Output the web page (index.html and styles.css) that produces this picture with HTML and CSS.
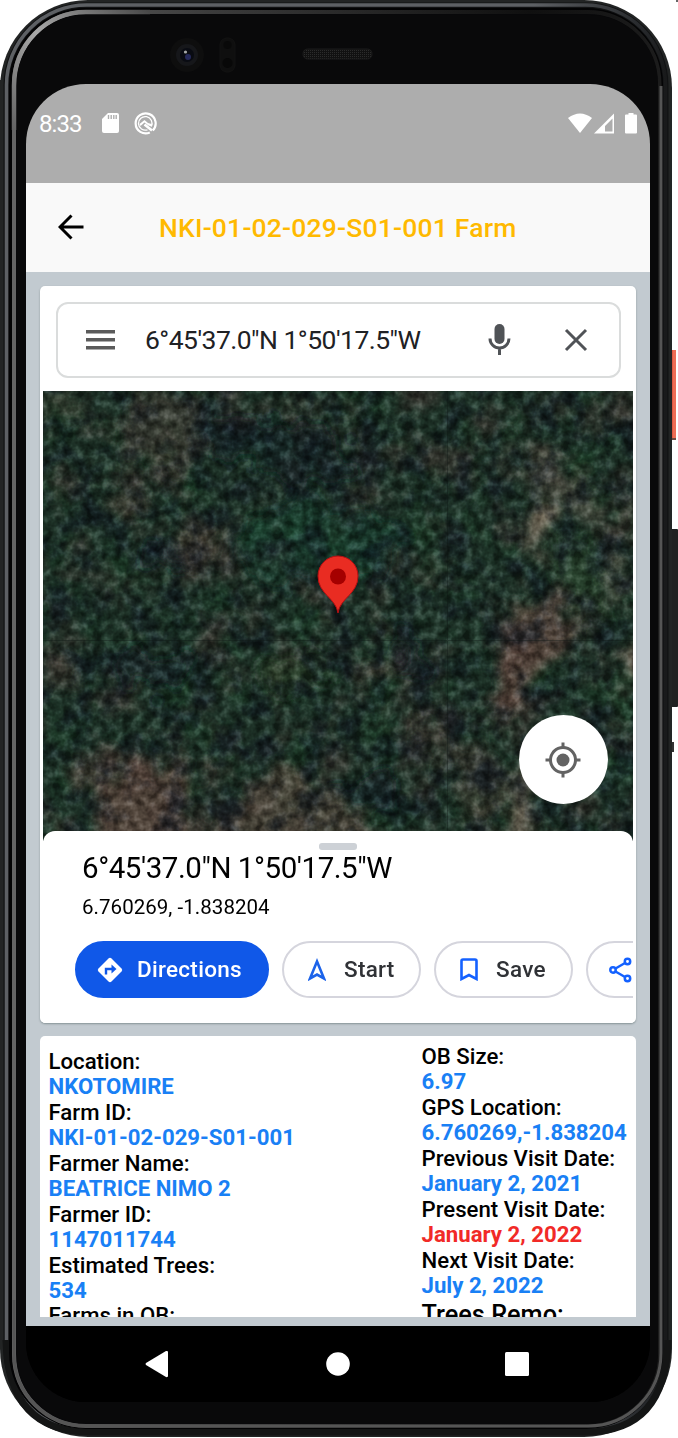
FILE: index.html
```html
<!DOCTYPE html>
<html lang="en">
<head>
<meta charset="utf-8">
<title>Farm details</title>
<link rel="stylesheet" href="styles.css">
</head>
<body>
<div class="device">
  <svg class="shell" width="678" height="1438" viewBox="0 0 678 1438" aria-hidden="true">
    <defs>
      <linearGradient id="rim" x1="0" y1="0" x2="1" y2="0">
        <stop offset="0" stop-color="#5d6064"/><stop offset=".8" stop-color="#5d6064"/><stop offset=".97" stop-color="#25272a"/><stop offset="1" stop-color="#191a1b"/>
      </linearGradient>
      <linearGradient id="bevel" x1="0" y1="0" x2="1" y2="0">
        <stop offset="0" stop-color="#646464"/><stop offset=".3" stop-color="#3c3c3c"/><stop offset=".8" stop-color="#101010"/><stop offset="1" stop-color="#1c1c1c"/>
      </linearGradient>
      <linearGradient id="shine" gradientUnits="userSpaceOnUse" x1="14" y1="130" x2="150" y2="12">
        <stop offset="0" stop-color="#646464"/><stop offset=".45" stop-color="#a8a8a8"/><stop offset="1" stop-color="#484848"/>
      </linearGradient>
      <pattern id="mesh" width="2" height="2" patternUnits="userSpaceOnUse"><rect width="2" height="2" fill="#111"/><rect width="1" height="1" fill="#2b2b2b"/></pattern>
    </defs>
    <rect x="670" y="350" width="6" height="89" fill="#ed6d55"/>
    <rect x="671" y="350" width="2" height="89" fill="#dc5942"/>
    <rect x="670" y="438" width="6" height="2" fill="#6d4a43"/>
    <rect x="670" y="529" width="8" height="178" rx="1" fill="#202121"/>
    <rect x="672" y="742" width="2" height="10" fill="#333"/>
    <rect x="676" y="0" width="2" height="2" fill="#666"/>
    <rect x="0" y="0" width="672" height="1437" rx="88" ry="88" fill="#222424"/>
    <path d="M0 80h8v1268H0z" fill="#222424"/>
    <rect x="3.500" y="2.500" width="665" height="1431" rx="83" fill="#111213"/>
    <rect x="6.500" y="5" width="659" height="1425" rx="80" fill="none" stroke="url(#rim)" stroke-width="3.500"/>
    <path d="M6 1340Q8 1432 90 1432H586Q666 1432 668 1340" fill="none" stroke="#141515" stroke-width="7"/>
    <rect x="9" y="8" width="654" height="1421" rx="77" fill="#030304"/>
    <rect x="14" y="12" width="645.500" height="1414" rx="72" fill="#08080a" stroke="url(#bevel)" stroke-width="4"/>
    <path d="M14 130V86A72 74 0 0 1 86 12H150" fill="none" stroke="url(#shine)" stroke-width="4.500"/>
    <path d="M14 1300V1354A72 72 0 0 0 86 1426H588A73 73 0 0 0 661 1353V86" fill="none" stroke="#555" stroke-width="3"/>
    <rect x="17" y="15" width="641" height="1408" rx="68" fill="#09090a"/>
    <circle cx="187" cy="55" r="17" fill="#0e0e0e"/><circle cx="187" cy="55" r="11" fill="#16171a"/><circle cx="187" cy="55" r="7" fill="#090b12"/><circle cx="188" cy="57" r="3" fill="#25295a"/><circle cx="185.500" cy="52" r="1.600" fill="#a7a9a8"/>
    <rect x="220" y="38" width="15" height="34" rx="7" fill="#0f0f0f" stroke="#131313"/><circle cx="227.500" cy="45" r="4" fill="#090909"/><circle cx="227.500" cy="63" r="5" fill="#080808"/>
    <rect x="303" y="49" width="69" height="10" rx="4.500" fill="url(#mesh)" stroke="#1c1c1c"/>
  </svg>
  <main class="screen">
    <div class="status">
      <span class="clock">8:33</span>
      <svg class="sd" width="17" height="21" viewBox="0 0 17 21"><path d="M6 0h9q2 0 2 2v16q0 2-2 2H2q-2 0-2-2V6z" fill="#fff"/><path d="M6.500 2v4M9.200 2v4M11.800 2v4M14.200 2v4" stroke="#aeaeae" stroke-width="1.400"/></svg>
      <svg class="badge" width="23" height="23" viewBox="0 0 23 23" fill="none" stroke="#fff"><path d="M18.700 18.500A10 10 0 1 0 15.800 20.500" stroke-width="2.200"/><path d="M17.300 14.500A6.800 6.800 0 1 0 13.500 17.800" stroke-width="1.300"/><path d="M5.500 12L10.500 8l3.500 3 3.500 1v2.500l-3-1L10.500 10.500 6.500 14z" fill="#fff" stroke="none"/><path d="M10.500 12.500l7.500 6" stroke-width="2.600"/></svg>
      <svg class="signals" width="70" height="21" viewBox="0 0 70 21"><path d="M0 5Q12-4 24 5L12 20z" fill="#fff"/><path fill-rule="evenodd" d="M26 20.500L46 .500v20zM37 18.500h7.500V5.500L37 13z" fill="#fff"/><path d="M57 2.500q0-1 1-1h2.500V0h5v1.500H68q1 0 1 1v17q0 1-1 1H58q-1 0-1-1z" fill="#fff"/></svg>
    </div>
    <header class="bar">
      <svg class="back" width="26" height="26" viewBox="0 0 26 26" fill="none" stroke="#000" stroke-width="3"><path d="M25.500 13H2.500M13.500 1.500L2 13l11.500 11.500"/></svg>
      <h1 class="title">NKI-01-02-029-S01-001 Farm</h1>
    </header>
    <div class="content">
      <section class="card place">
        <div class="search">
          <svg width="30" height="20" viewBox="0 0 30 20" fill="#5b5b5b"><path d="M0 0h29v3.500H0zM0 8h29v3.500H0zM0 16h29v3.500H0z"/></svg>
          <span class="query">6°45'37.0"N 1°50'17.5"W</span>
          <svg class="mic" width="24" height="31" viewBox="0 0 24 31"><rect x="6.500" y="0" width="10" height="20" rx="5" fill="#505357"/><path d="M2 14.500a9.500 9.500 0 0 0 19 0M11.500 24v7" fill="none" stroke="#505357" stroke-width="3"/></svg>
          <svg width="24" height="24" viewBox="0 0 24 24"><path d="M2 2l20 20M22 2L2 22" stroke="#505357" stroke-width="3"/></svg>
        </div>
        <div class="map">
          <svg class="imagery" width="590" height="450" viewBox="0 0 590 450">
            <defs>
              <filter id="blotch" x="-20%" y="-20%" width="140%" height="140%"><feTurbulence type="fractalNoise" baseFrequency=".04" numOctaves="4" seed="4" result="n"/><feDisplacementMap in="SourceGraphic" in2="n" scale="55" xChannelSelector="R" yChannelSelector="G"/><feGaussianBlur stdDeviation="5"/></filter>
              <filter id="leaf" x="0" y="0" width="100%" height="100%" color-interpolation-filters="sRGB"><feTurbulence type="fractalNoise" baseFrequency=".025" numOctaves="5" seed="31"/><feColorMatrix values="0 0 0 0 .12  0 0 0 0 .29  0 0 0 0 .17  0 0 0 2.600 -1.200"/></filter>
              <filter id="soil" x="0" y="0" width="100%" height="100%" color-interpolation-filters="sRGB"><feTurbulence type="fractalNoise" baseFrequency=".02" numOctaves="5" seed="17"/><feColorMatrix values="0 0 0 0 .30  0 0 0 0 .23  0 0 0 0 .22  0 0 0 3 -1.400"/></filter>
              <filter id="shade" x="0" y="0" width="100%" height="100%" color-interpolation-filters="sRGB"><feTurbulence type="fractalNoise" baseFrequency=".035" numOctaves="5" seed="23"/><feColorMatrix values="0 0 0 0 .06  0 0 0 0 .09  0 0 0 0 .13  0 0 0 3.200 -1.450"/></filter>
              <filter id="grain" x="0" y="0" width="100%" height="100%" color-interpolation-filters="sRGB"><feTurbulence type="fractalNoise" baseFrequency=".1" numOctaves="3" seed="7"/><feColorMatrix values="0 0 0 1.600 -.360  0 0 0 1.600 -.360  0 0 0 1.600 -.360  0 0 0 0 1"/></filter>
            </defs>
            <rect width="590" height="450" fill="#20352a"/>
            <rect width="590" height="450" filter="url(#leaf)" opacity=".5"/>
            <rect width="590" height="450" filter="url(#soil)" opacity=".5"/>
            <g filter="url(#blotch)" transform="translate(4 4)">
              <g fill="#6a5148" opacity=".7">
                <path d="M97 0h55l8 45-30 32-40-8-15-25z" opacity=".5"/><path d="M75 75l30 10-20 42-15-8z" opacity=".55"/><ellipse cx="145" cy="146" rx="20" ry="32" opacity=".65"/>
                <path d="M458 215l45-12 28 28-15 28-30 15-12 34-25 3 8-47z"/><ellipse cx="357" cy="257" rx="9" ry="14"/><ellipse cx="322" cy="281" rx="18" ry="10" opacity=".6"/>
                <path d="M40 450L58 393l45-30 50 20-15 40-20 35z"/><path d="M20 365h55l-8 22-42 5z" opacity=".7"/><path d="M170 450l40-70 35-12 45 40 60 42z" opacity=".8"/><path d="M0 268l35 8-15 23H0z" opacity=".5"/>
                <path d="M352 335l42-17 65 55 45-5-35 45-45 7-32-48z" opacity=".5"/><path d="M440 450l22-35 80 35z" opacity=".6"/>
              </g>
              <g fill="#807464"><path d="M470 50l35 8 15 38 15-12 40 42-32 8-55-35z" opacity=".4"/><path d="M476 135l27-27 7 16-27 27z" opacity=".9"/><path d="M557 150l30 42-15 12z" opacity=".5"/><ellipse cx="588" cy="267" rx="10" ry="20" fill="#98806c"/><path d="M466 374l22 15-12 53-15-7z" opacity=".75"/></g>
              <g fill="#345037" opacity=".55"><path d="M478 155l55-20 30 40-20 65-30-60z"/><ellipse cx="270" cy="150" rx="80" ry="45" fill="#1d4a34" opacity=".8"/><ellipse cx="245" cy="278" rx="38" ry="22" fill="#29502e" opacity=".7"/></g>
              <g fill="#131e2b" opacity=".55"><ellipse cx="115" cy="161" rx="30" ry="14"/><path d="M60 258l85 4-15 34-62-10z"/><ellipse cx="325" cy="160" rx="15" ry="11"/><path d="M345 238l40 15-5 30-35-10z"/><ellipse cx="320" cy="396" rx="28" ry="18"/><path d="M160 20l120 10 30 50-60 10-90-30z"/></g>
            </g>
            <rect width="590" height="450" filter="url(#shade)" opacity=".6"/>
            <rect width="590" height="450" class="grain" filter="url(#grain)"/>
            <path d="M404.500 0v450M0 249.500h590" stroke="#101914" opacity=".35"/>
            <path d="M295 222C293 207 275 203 275 185a20 20 0 0 1 40 0C315 203 297 207 295 222z" fill="#e92c22" stroke="#b70f12"/><circle cx="295" cy="185.500" r="8" fill="#a50000"/>
          </svg>
          <button class="locate" aria-label="My location"><svg width="36" height="36" viewBox="0 0 36 36"><g fill="none" stroke="#636363" stroke-width="3"><circle cx="18" cy="18" r="12.500"/><path d="M18 .5v5M18 30.500v5M.5 18h5M30.500 18h5"/></g><circle cx="18" cy="18" r="6.500" fill="#636363"/></svg></button>
        </div>
        <div class="sheet">
          <div class="grip"></div>
          <h2 class="coords">6°45'37.0"N 1°50'17.5"W</h2>
          <p class="decimal">6.760269, -1.838204</p>
          <div class="actions">
            <button class="chip primary"><svg width="26" height="26" viewBox="0 0 26 26"><path d="M11.500 1.500q1.500-1.500 3 0l10 10q1.500 1.500 0 3l-10 10q-1.500 1.500-3 0l-10-10q-1.500-1.500 0-3z" fill="#fff"/><path d="M9 17.500V12h6" fill="none" stroke="#1058e8" stroke-width="2.400"/><path d="M14.500 7.500l5 4.500-5 4.500z" fill="#1058e8"/></svg><span>Directions</span></button>
            <button class="chip start"><svg width="18" height="23" viewBox="0 0 18 23"><path d="M9 3.500L2 20.500l7-4 7 4z" fill="none" stroke="#1c63ea" stroke-width="2.600"/></svg><span>Start</span></button>
            <button class="chip save"><svg width="18" height="23" viewBox="0 0 18 23"><path d="M1.500 21V3q0-1.500 1.500-1.500h12q1.500 0 1.500 1.500v18L9 17z" fill="none" stroke="#1461ff" stroke-width="2.600"/></svg><span>Save</span></button>
            <button class="chip share" aria-label="Share"><svg width="24" height="26" viewBox="0 0 24 26" fill="none" stroke="#1461ff" stroke-width="2.500"><path d="M6.500 11.500L16 6M6.500 14.500L16 20"/><circle cx="4" cy="13" r="2.700"/><circle cx="18.500" cy="4.500" r="2.700"/><circle cx="18.500" cy="21.500" r="2.700"/></svg></button>
          </div>
        </div>
      </section>
      <section class="card facts">
        <dl class="col left">
          <dt>Location:</dt><dd>NKOTOMIRE</dd>
          <dt>Farm ID:</dt><dd class="id">NKI-01-02-029-S01-001</dd>
          <dt>Farmer Name:</dt><dd>BEATRICE NIMO 2</dd>
          <dt>Farmer ID:</dt><dd>1147011744</dd>
          <dt>Estimated Trees:</dt><dd>534</dd>
          <dt>Farms in OB:</dt>
        </dl>
        <dl class="col right">
          <dt>OB Size:</dt><dd>6.97</dd>
          <dt>GPS Location:</dt><dd>6.760269,-1.838204</dd>
          <dt>Previous Visit Date:</dt><dd>January 2, 2021</dd>
          <dt>Present Visit Date:</dt><dd class="due">January 2, 2022</dd>
          <dt>Next Visit Date:</dt><dd>July 2, 2022</dd>
          <dt class="large">Trees Remo:</dt>
        </dl>
      </section>
    </div>
    <nav class="nav">
      <svg width="24" height="28" viewBox="0 0 24 28"><path d="M1 13L21 1q2-.5 2 1v24q0 1.500-2 1L1 15q-1-1 0-2z" fill="#fff"/></svg>
      <svg class="home" width="24" height="24" viewBox="0 0 24 24"><circle cx="12" cy="12" r="11.800" fill="#fff"/></svg>
      <svg width="24" height="24" viewBox="0 0 24 24"><rect width="24" height="24" rx="1.500" fill="#fff"/></svg>
    </nav>
  </main>
</div>
</body>
</html>
```
FILE: styles.css
```css
* { box-sizing: border-box; }
body { margin: 0; background: #fff; font-family: Roboto, sans-serif; }
h1, h2, p, dl, dd { margin: 0; }
svg { display: block; flex: none; }
button { font: inherit; }
.device { position: relative; width: 678px; height: 1438px; padding: 84px 28px 36px 26px; overflow: hidden; }
.shell { position: absolute; inset: 0; }
.screen { position: relative; height: 1318px; display: flex; flex-direction: column; border-radius: 60px; overflow: hidden; background: #000; }
.status { height: 99px; background: #adadad; display: flex; align-items: flex-start; padding: 28px 13px 0 13px; color: #fff; }
.clock { width: 63px; font-size: 24px; line-height: 25px; letter-spacing: -.95px; }
.sd { margin-top: 1px; }
.badge { margin-left: 15px; }
.signals { margin-left: auto; margin-right: -1px; margin-top: 1px; }
.bar { height: 89px; background: #f9f9f9; display: flex; align-items: center; padding-left: 32px; }
.back { margin-bottom: 1px; }
.title { margin-left: 75px; font-size: 26.5px; font-weight: 500; color: #ffb900; white-space: nowrap; letter-spacing: .2px; }
.content { height: 1054px; background: #c2cad0; padding: 14px 14px 9px 14px; display: flex; flex-direction: column; gap: 13px; }
.card { background: #fff; border-radius: 5px; box-shadow: 0 1px 2px rgba(60, 80, 80, .45); }
.place { height: 737px; padding: 16px 3px 0 3px; flex: none; overflow: hidden; }
.search { width: 565px; height: 76px; margin-left: 13px; border: 2px solid #dadcdc; border-radius: 12px; display: flex; align-items: center; padding: 0 31px 0 28px; }
.query { margin: 0 0 2px 29px; font-size: 26.5px; color: #202124; flex: 1; white-space: nowrap; letter-spacing: -.53px; }
.mic { margin: 0 52px 2px 0; }
.map { position: relative; height: 440px; margin-top: 13px; }
.imagery { position: absolute; top: 0; left: 0; }
.grain { mix-blend-mode: soft-light; opacity: .65; }
.locate { position: absolute; right: 25px; bottom: 27px; width: 89px; height: 89px; border: 0; border-radius: 50%; background: #fff; display: grid; place-items: center; padding: 0 1px 0 0; }
.sheet { position: relative; height: 192px; border-radius: 12px 12px 0 0; background: #fff; padding-top: 12px; overflow: hidden; }
.grip { width: 38px; height: 7px; margin: 0 auto; border-radius: 3px; background: #cdd1d6; }
.coords { margin: 0 0 0 39px; font-size: 29.5px; line-height: 36px; font-weight: 400; white-space: nowrap; color: #000; letter-spacing: -.45px; }
.decimal { margin: 8px 0 0 39px; font-size: 20.5px; line-height: 26px; letter-spacing: .04px; }
.actions { display: flex; gap: 13px; margin: 21px 0 0 32px; }
.chip { flex: none; height: 57px; border: 2px solid #d5d5dd; border-radius: 29px; background: #fff; display: flex; align-items: center; padding: 0 0 0 22px; font-size: 22.5px; font-weight: 500; color: #303236; letter-spacing: .28px; }
.chip span { margin-bottom: 2px; }
.primary { width: 194px; background: #1058e8; border-color: #1058e8; color: #fff; padding-left: 20px; gap: 14px; }
.start { width: 139px; gap: 18px; padding-left: 24px; }
.save { width: 139px; gap: 18px; padding-left: 24px; }
.share { width: 140px; padding-left: 21px; }
.facts { height: 281px; border-radius: 5px 5px 0 0; overflow: hidden; display: grid; grid-template-columns: 373px 1fr; padding-left: 8.5px; box-shadow: none; }
.col { font-size: 22.2px; line-height: 25.45px; font-weight: 500; white-space: nowrap; color: #000; }
.left { padding-top: 12.9px; }
.right { padding-top: 8px; }
.col dd { color: #1980f5; font-weight: 700; }
.col .due { color: #f12a27; }
.col .large { font-size: 25.3px; line-height: 31px; }
.nav { height: 76px; display: flex; justify-content: space-between; align-items: center; padding: 0 121px 0 119px; background: #000; }
.home { margin-left: 1px; }
```
